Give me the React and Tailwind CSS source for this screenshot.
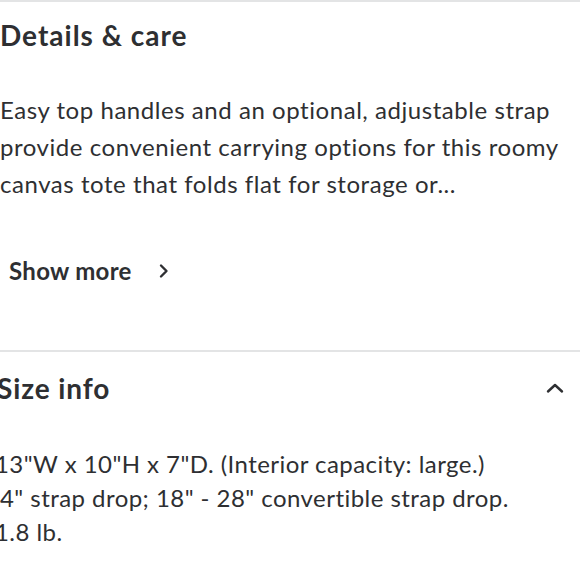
import React from 'react';

const ChevronRight = () => (
  <svg width="16" height="16" viewBox="0 0 16 16" fill="none" stroke="currentColor" strokeWidth="2.4" strokeLinecap="round" strokeLinejoin="round">
    <path d="M5 2.5 10.5 8 5 13.5" />
  </svg>
);

const ChevronUp = () => (
  <svg width="18" height="12" viewBox="0 0 18 12" fill="none" stroke="currentColor" strokeWidth="2.4" strokeLinecap="round" strokeLinejoin="round">
    <path d="M2 9.5 9 3l7 6.5" />
  </svg>
);

const App = () => {
  return (
    <div
      className="w-[580px] h-[580px] overflow-hidden bg-white text-[#2e2f32]"
      style={{ fontFamily: 'Lato, "Open Sans", sans-serif' }}
    >
      {/* Details & care */}
      <section className="border-t-2 border-[#e3e4e5] pb-[63px]">
        <h2 className="mt-[13px] text-[28px] font-bold leading-[40px] tracking-[1px]">Details &amp; care</h2>
        <p className="mt-[36px] text-[24px] leading-[37px] tracking-[0.55px]">
          Easy top handles and an optional, adjustable strap provide convenient carrying options for this roomy canvas tote that folds flat for storage or...
        </p>
        <button className="mt-[53px] ml-[9px] flex items-center gap-[24px] text-[24px] font-bold leading-[32px] tracking-[0.3px]">
          <span>Show more</span>
          <ChevronRight />
        </button>
      </section>

      {/* Size info */}
      <section className="border-t-2 border-[#e3e4e5]">
        <div className="flex items-center justify-between pt-[16px] pr-[16px]">
          <h2 className="-ml-[3px] text-[28px] font-bold leading-[40px] tracking-[0.9px]">Size info</h2>
          <ChevronUp />
        </div>
        <div className="mt-[39px] text-[24px] leading-[34px] tracking-[0.45px]">
          <p className="-ml-[5px]">13"W x 10"H x 7"D. (Interior capacity: large.)</p>
          <p>4" strap drop; 18" - 28" convertible strap drop.</p>
          <p className="-ml-[5px]">1.8 lb.</p>
        </div>
      </section>
    </div>
  );
};

export default App;
